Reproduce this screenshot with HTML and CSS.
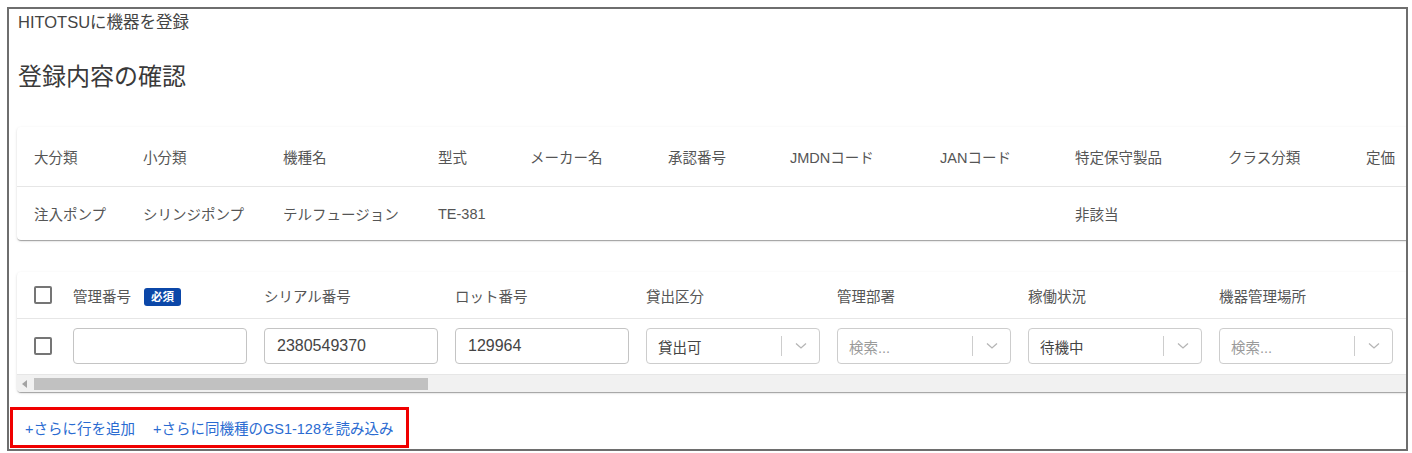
FILE: index.html
```html
<!DOCTYPE html>
<html lang="ja">
<head>
  <meta charset="UTF-8">
  <title>HITOTSUに機器を登録</title>
  <link rel="stylesheet" href="styles.css">
</head>
<body>

<div class="frame">
  <div class="app-name">HITOTSUに機器を登録</div>
  <h2 class="page-title">登録内容の確認</h2>

  <!-- model info -->
  <div class="card">
    <div class="info-row head">
      <div>大分類</div>
      <div>小分類</div>
      <div>機種名</div>
      <div>型式</div>
      <div>メーカー名</div>
      <div>承認番号</div>
      <div>JMDNコード</div>
      <div>JANコード</div>
      <div>特定保守製品</div>
      <div>クラス分類</div>
      <div>定価</div>
    </div>
    <div class="info-row body">
      <div>注入ポンプ</div>
      <div>シリンジポンプ</div>
      <div>テルフュージョン</div>
      <div>TE-381</div>
      <div></div>
      <div></div>
      <div></div>
      <div></div>
      <div>非該当</div>
      <div></div>
      <div></div>
    </div>
  </div>

  <!-- devices -->
  <div class="card">
    <div class="dev-row head">
      <div><span class="check"></span></div>
      <div>管理番号 <span class="badge">必須</span></div>
      <div>シリアル番号</div>
      <div>ロット番号</div>
      <div>貸出区分</div>
      <div>管理部署</div>
      <div>稼働状況</div>
      <div>機器管理場所</div>
    </div>
    <div class="dev-row body">
      <div><span class="check"></span></div>
      <div><div class="input"></div></div>
      <div><div class="input">2380549370</div></div>
      <div><div class="input">129964</div></div>
      <div>
        <div class="select">
          <span class="value">貸出可</span>
          <span class="sep"></span>
          <svg class="chev" width="12" height="8" viewBox="0 0 12 8"><path d="M1 1.5 L6 6 L11 1.5" fill="none" stroke="#b5b5b5" stroke-width="1.3"/></svg>
        </div>
      </div>
      <div>
        <div class="select">
          <span class="value placeholder">検索...</span>
          <span class="sep"></span>
          <svg class="chev" width="12" height="8" viewBox="0 0 12 8"><path d="M1 1.5 L6 6 L11 1.5" fill="none" stroke="#b5b5b5" stroke-width="1.3"/></svg>
        </div>
      </div>
      <div>
        <div class="select">
          <span class="value">待機中</span>
          <span class="sep"></span>
          <svg class="chev" width="12" height="8" viewBox="0 0 12 8"><path d="M1 1.5 L6 6 L11 1.5" fill="none" stroke="#b5b5b5" stroke-width="1.3"/></svg>
        </div>
      </div>
      <div>
        <div class="select">
          <span class="value placeholder">検索...</span>
          <span class="sep"></span>
          <svg class="chev" width="12" height="8" viewBox="0 0 12 8"><path d="M1 1.5 L6 6 L11 1.5" fill="none" stroke="#b5b5b5" stroke-width="1.3"/></svg>
        </div>
      </div>
    </div>
    <div class="scrollbar">
      <svg class="arrow" width="6" height="8" viewBox="0 0 6 8"><path d="M5 0 L5 8 L0 4 Z" fill="#a3a3a3"/></svg>
      <div class="thumb"></div>
    </div>
  </div>

  <div class="actions">
    <a href="#">+さらに行を追加</a>
    <a href="#">+さらに同機種のGS1-128を読み込み</a>
  </div>
</div>

</body>
</html>
```

FILE: styles.css
```css
body {
  margin: 0;
  background: #fff;
  color: #444;
  font-family: "Liberation Sans", "Noto Sans CJK JP", sans-serif;
  font-size: 14.5px;
}
.frame {
  box-sizing: border-box;
  width: 1401px;
  height: 444px;
  margin: 7px 0 0 7px;
  border: 2px solid #6e6e6e;
  padding: 3px 0 0 8px;
  overflow: hidden;
}
.app-name {
  margin-left: 1px;
  font-size: 16.5px;
  line-height: 20px;
  color: #444;
}
.page-title {
  margin: 29px 0 0 1px;
  font-size: 24px;
  font-weight: normal;
  line-height: 32px;
  color: #3a3a3a;
}
.card {
  width: 1440px;
  background: #fff;
  border-radius: 4px;
  box-shadow: 0 2px 1px -1px rgba(0,0,0,0.2), 0 1px 1px 0 rgba(0,0,0,0.14), 0 1px 3px 0 rgba(0,0,0,0.12);
  margin-top: 34px;
}
.card + .card {
  margin-top: 32px;
}

/* model info table */
.info-row {
  display: grid;
  grid-template-columns: 109px 140px 155px 92px 138px 122px 150px 135px 153px 138px 100px;
  padding-left: 17px;
  align-items: center;
  color: #555;
  white-space: nowrap;
}
.info-row.head {
  height: 59px;
  border-bottom: 1px solid #e6e6e6;
}
.info-row.body {
  height: 53px;
}

/* device table */
.dev-row {
  display: grid;
  grid-template-columns: 39px repeat(7, 191px);
  padding-left: 17px;
  align-items: center;
  color: #555;
  white-space: nowrap;
}
.dev-row.head {
  height: 46px;
  border-bottom: 1px solid #e6e6e6;
}
.dev-row.body {
  height: 54px;
  padding-bottom: 1px;
  box-sizing: content-box;
  border-bottom: 1px solid #e6e6e6;
}
.check {
  display: block;
  box-sizing: border-box;
  width: 18px;
  height: 18px;
  border: 2px solid #757575;
  border-radius: 2px;
}
.badge {
  display: inline-block;
  margin-left: 9px;
  padding: 0 7px;
  height: 18px;
  line-height: 18px;
  font-size: 11.5px;
  font-weight: bold;
  color: #fff;
  background: #0b47a8;
  border-radius: 3px;
  vertical-align: 1px;
}
.input {
  box-sizing: border-box;
  width: 174px;
  height: 36px;
  border: 1px solid #c4c4c4;
  border-radius: 4px;
  padding-left: 12px;
  font-size: 16px;
  line-height: 34px;
  color: #444;
}
.select {
  box-sizing: border-box;
  width: 174px;
  height: 36px;
  border: 1px solid #cdcdcd;
  border-radius: 4px;
  display: flex;
  align-items: center;
}
.select .value {
  width: 123px;
  padding-left: 11px;
  color: #444;
}
.select .placeholder {
  color: #9a9a9a;
}
.select .sep {
  width: 1px;
  height: 20px;
  background: #cdcdcd;
}
.select .chev {
  margin-left: 13px;
}
.scrollbar {
  height: 17px;
  background: #f1f1f1;
  display: flex;
  align-items: center;
  border-radius: 0 0 4px 4px;
}
.scrollbar .arrow {
  margin-left: 5px;
}
.scrollbar .thumb {
  width: 394px;
  height: 12px;
  margin-left: 6px;
  background: #c1c1c1;
}
.actions {
  box-sizing: border-box;
  width: 399px;
  height: 41px;
  margin: 15px 0 0 -7px;
  border: 3px solid #f00000;
  padding-left: 12px;
  display: flex;
  align-items: center;
  gap: 18px;
}
.actions a {
  color: #2a6bd1;
  text-decoration: none;
}
```
